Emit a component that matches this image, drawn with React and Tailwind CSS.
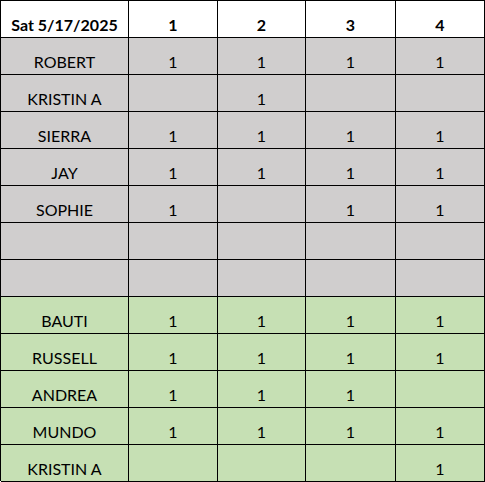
const rows = [
  { name: "ROBERT", marks: [1, 1, 1, 1], tone: "gray" },
  { name: "KRISTIN A", marks: [0, 1, 0, 0], tone: "gray" },
  { name: "SIERRA", marks: [1, 1, 1, 1], tone: "gray" },
  { name: "JAY", marks: [1, 1, 1, 1], tone: "gray" },
  { name: "SOPHIE", marks: [1, 0, 1, 1], tone: "gray" },
  { name: "", marks: [0, 0, 0, 0], tone: "gray" },
  { name: "", marks: [0, 0, 0, 0], tone: "gray" },
  { name: "BAUTI", marks: [1, 1, 1, 1], tone: "green" },
  { name: "RUSSELL", marks: [1, 1, 1, 1], tone: "green" },
  { name: "ANDREA", marks: [1, 1, 1, 0], tone: "green" },
  { name: "MUNDO", marks: [1, 1, 1, 1], tone: "green" },
  { name: "KRISTIN A", marks: [0, 0, 0, 1], tone: "green" },
]

const toneClass = {
  white: "bg-white",
  gray: "bg-[#d0cece]",
  green: "bg-[#c6e0b4]",
}

function Cell({ children, tone, bold }) {
  return (
    <div
      className={`h-[37px] border-r border-b border-black flex items-end justify-center pb-[2px] leading-[20px] ${toneClass[tone]} ${bold ? "font-bold" : ""}`}
    >
      {children}
    </div>
  )
}

export default function App() {
  return (
    <div className="w-[485px] h-[482px] bg-white text-black text-[16px] font-['Lato',_'Open_Sans',_sans-serif]">
      <div className="grid grid-cols-[128px_89px_88px_90px_89px] grid-rows-[37px_37px_37px_37px_37px_37px_37px_37px_37px_37px_37px_37px_36px] border-l border-t border-black w-[485px]">
        <Cell tone="white" bold>Sat 5/17/2025</Cell>
        {[1, 2, 3, 4].map((n) => (
          <Cell key={n} tone="white" bold>{n}</Cell>
        ))}

        {rows.map((row, i) => (
          <div key={i} className="contents">
            <Cell tone={row.tone}>{row.name}</Cell>
            {row.marks.map((m, j) => (
              <Cell key={j} tone={row.tone}>{m ? "1" : ""}</Cell>
            ))}
          </div>
        ))}
      </div>
    </div>
  )
}
